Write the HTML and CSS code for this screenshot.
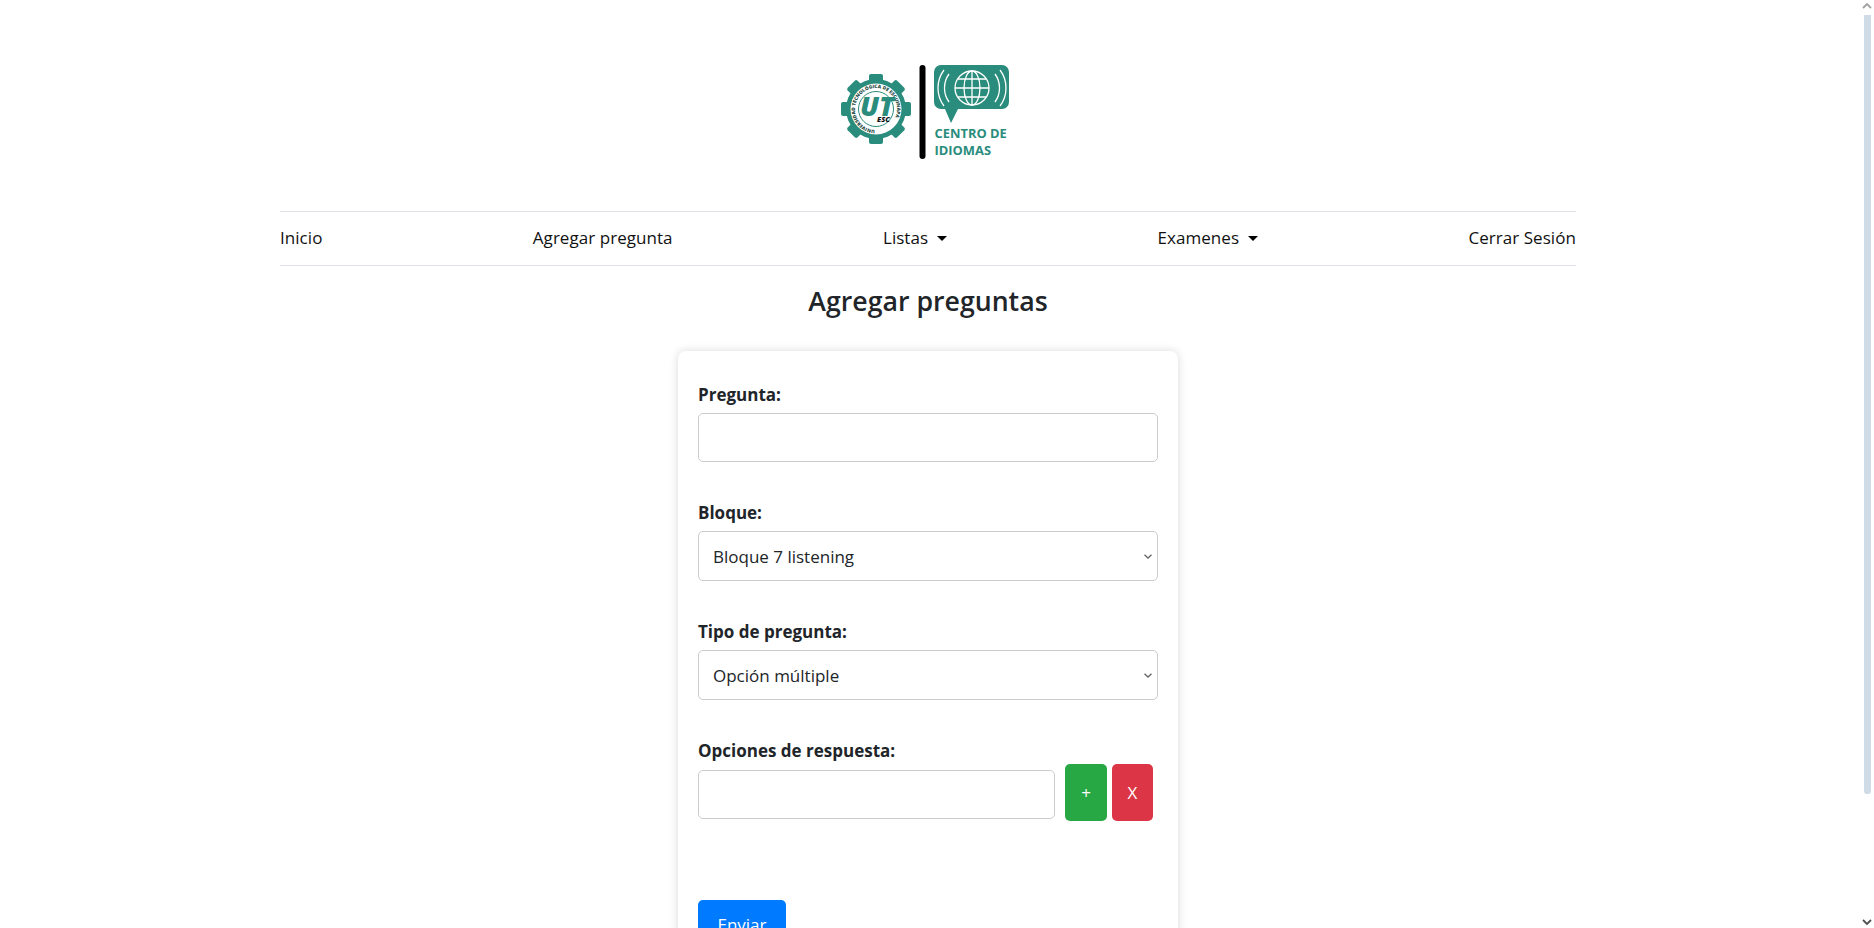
FILE: index.html
```html
<!DOCTYPE html>
<html lang="es">

<head>
  <meta charset="utf-8">
  <title>Agregar preguntas</title>
  <link rel="stylesheet" href="styles.css">
</head>

<body>
  <div class="page">
    <header class="logo-bar">
      <svg class="logo" viewBox="840 60 176 104" width="176" height="104">
        <defs>
          <path id="ring-text" d="M877 130a21 21 0 1 1 .01 0"></path>
        </defs>
        <!-- gear -->
        <g transform="translate(-1 0)">
          <g fill="#2a8c7c">
            <circle cx="877" cy="109" r="30"></circle>
            <rect x="870" y="74" width="14" height="70" rx="2"></rect>
            <rect x="870" y="74" width="14" height="70" rx="2" transform="rotate(45 877 109)"></rect>
            <rect x="870" y="74" width="14" height="70" rx="2" transform="rotate(90 877 109)"></rect>
            <rect x="870" y="74" width="14" height="70" rx="2" transform="rotate(135 877 109)"></rect>
          </g>
          <circle cx="877" cy="109" r="25.500" fill="#fff"></circle>
          <text class="ring-label"><textPath href="#ring-text" startOffset="1">UNIVERSIDAD TECNOLÓGICA DE ESCUINAPA</textPath></text>
          <circle cx="877" cy="109" r="17.500" fill="#fff" stroke="#2a8c7c" stroke-width="1"></circle>
          <text class="ut-mark" x="861" y="116" textLength="34" lengthAdjust="spacingAndGlyphs">UT</text>
          <text class="esc-mark" x="878" y="122">ESC</text>
        </g>
        <!-- divider -->
        <rect x="919.500" y="65" width="6" height="94" rx="3" fill="#000"></rect>
        <!-- speech bubble -->
        <path d="M941 65h61a7 7 0 0 1 7 7v30a7 7 0 0 1-7 7h-44l-7 14-6-14h-4a7 7 0 0 1-7-7v-30a7 7 0 0 1 7-7z" fill="#2a8c7c"></path>
        <g fill="none" stroke="#fff" stroke-width="1.300">
          <circle cx="972" cy="88" r="17"></circle>
          <ellipse cx="972" cy="88" rx="8" ry="17"></ellipse>
          <path d="M972 71v34M955 88h34M958 79h28M958 97h28"></path>
          <path d="M949 74a24 24 0 0 0 0 28M944 70a30 30 0 0 0 0 36M995 74a24 24 0 0 1 0 28M1000 70a30 30 0 0 1 0 36"></path>
        </g>
        <text class="logo-label" x="934.500" y="138">CENTRO DE</text>
        <text class="logo-label" x="934.500" y="155">IDIOMAS</text>
      </svg>
    </header>

    <nav class="main-nav">
      <a href="#">Inicio</a>
      <a href="#">Agregar pregunta</a>
      <a href="#" class="dropdown">Listas</a>
      <a href="#" class="dropdown">Examenes</a>
      <a href="#">Cerrar Sesión</a>
    </nav>

    <h2 class="page-title">Agregar preguntas</h2>

    <form class="question-card">
      <div class="form-group">
        <label for="pregunta">Pregunta:</label>
        <input type="text" id="pregunta">
      </div>
      <div class="form-group">
        <label for="bloque">Bloque:</label>
        <select id="bloque">
          <option>Bloque 7 listening</option>
        </select>
      </div>
      <div class="form-group">
        <label for="tipo">Tipo de pregunta:</label>
        <select id="tipo">
          <option>Opción múltiple</option>
        </select>
      </div>
      <div class="form-group options-group">
        <label for="opcion">Opciones de respuesta:</label>
        <div class="option-row">
          <input type="text" id="opcion">
          <button type="button" class="btn btn-add">+</button>
          <button type="button" class="btn btn-remove">X</button>
        </div>
      </div>
      <button type="submit" class="btn btn-send">Enviar</button>
    </form>
  </div>

  <div class="scrollbar">
    <svg class="scroll-arrow" viewBox="0 0 10 6" width="10" height="6"><path d="M1 5l4-4 4 4" fill="none" stroke="#a3a3a3" stroke-width="1.800"></path></svg>
    <div class="scroll-thumb"></div>
    <div class="scroll-rest"></div>
    <svg class="scroll-arrow" viewBox="0 0 10 6" width="10" height="6"><path d="M1 1l4 4 4-4" fill="none" stroke="#505050" stroke-width="1.800"></path></svg>
  </div>
</body>

</html>
```

FILE: styles.css
```css
body {
  font-family: "Open Sans", "Noto Sans", sans-serif;
  font-size: 17px;
  line-height: 24px;
  color: #212529;
  background-color: #fff;
  margin: 0;
  height: 100vh;
  display: flex;
  overflow: hidden;
}

.page {
  flex: 1;
  min-width: 0;
  padding: 0 280px;
  overflow: hidden;
}

.logo-bar {
  display: flex;
  justify-content: center;
  padding-top: 60px;
  height: 211px;
  box-sizing: border-box;
}

.logo {
  display: block;
  margin-left: -1px;
}

.ring-label {
  font-family: "Open Sans", sans-serif;
  font-size: 4.800px;
  font-weight: 800;
  fill: #1d4a43;
}

.ut-mark {
  font-family: "Open Sans", sans-serif;
  font-size: 26px;
  font-weight: 800;
  font-style: italic;
  fill: #2a8c7c;
}

.esc-mark {
  font-family: "Open Sans", sans-serif;
  font-size: 7.500px;
  font-weight: 800;
  font-style: italic;
  fill: #111;
}

.logo-label {
  font-family: "Open Sans", sans-serif;
  font-size: 12.900px;
  font-weight: 700;
  fill: #2a8c7c;
}

.main-nav {
  display: flex;
  justify-content: space-between;
  align-items: center;
  height: 51px;
  padding-bottom: 2px;
  border-top: 1px solid #dee2e6;
  border-bottom: 1px solid #dee2e6;
}

.main-nav a {
  color: #111;
  text-decoration: none;
  letter-spacing: 0.050px;
}

.dropdown::after {
  content: "";
  display: inline-block;
  margin-left: 9px;
  vertical-align: 3px;
  border-top: 5px solid #000;
  border-left: 5px solid transparent;
  border-right: 5px solid transparent;
}

.page-title {
  margin: 17px 0 0;
  text-align: center;
  font-size: 26.700px;
  line-height: 36px;
  font-weight: 600;
}

.question-card {
  width: 500px;
  margin: 32px auto 0;
  padding: 32px 20px 20px;
  box-sizing: border-box;
  background-color: #fff;
  border-radius: 8px;
  box-shadow: 0 0 10px rgba(0, 0, 0, 0.15);
}

.form-group {
  margin-bottom: 39px;
}

label {
  display: block;
  margin-bottom: 6px;
  font-weight: 700;
}

input,
select {
  display: block;
  width: 100%;
  height: 49px;
  padding: 0 14px;
  box-sizing: border-box;
  font-family: inherit;
  font-size: 17px;
  color: #212529;
  background-color: #fff;
  border: 1px solid #ccc;
  border-radius: 5px;
}

select {
  height: 50px;
  appearance: none;
  background-image: url("data:image/svg+xml,%3Csvg xmlns='http://www.w3.org/2000/svg' viewBox='0 0 8 5'%3E%3Cpath d='M.5.8 4 4 7.500.8' fill='none' stroke='%23666' stroke-width='1.300'/%3E%3C/svg%3E");
  background-repeat: no-repeat;
  background-position: right 5px center;
  background-size: 8px 5px;
}

.options-group {
  margin-bottom: 79px;
}

.options-group label {
  margin-bottom: 1px;
}

.option-row {
  display: flex;
  align-items: flex-end;
  gap: 5px;
}

.option-row input {
  width: 357px;
  margin: 0 5px 2px 0;
}

.btn {
  padding: 0;
  border: none;
  border-radius: 5px;
  color: #fff;
  font-family: inherit;
  font-size: 17px;
  cursor: pointer;
}

.btn-add {
  width: 42px;
  height: 57px;
  background-color: #28a745;
}

.btn-remove {
  width: 41px;
  height: 57px;
  background-color: #dc3545;
}

.btn-send {
  width: 88px;
  height: 48px;
  background-color: #007bff;
}

.scrollbar {
  flex: none;
  width: 18px;
  height: 100vh;
  padding: 3px 3px 3px 8px;
  box-sizing: border-box;
  display: flex;
  flex-direction: column;
  align-items: center;
}

.scroll-arrow {
  flex: none;
  margin-left: -1px;
}

.scroll-thumb {
  flex: none;
  width: 7px;
  height: 779px;
  margin-top: 6px;
  background-color: #cfdbe6;
  border-radius: 0 0 3px 3px;
}

.scroll-rest {
  flex: 1;
}
```
